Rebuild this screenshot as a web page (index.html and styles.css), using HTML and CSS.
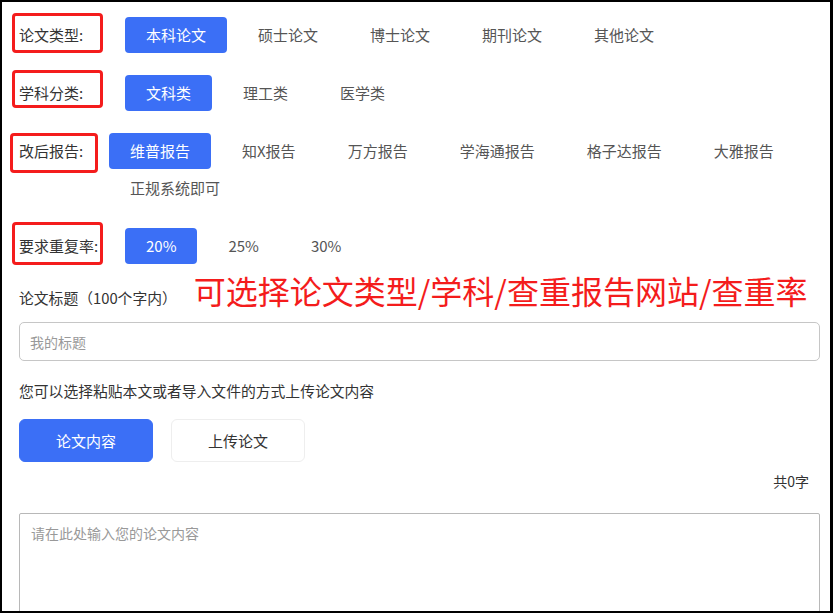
FILE: index.html
```html
<!DOCTYPE html>
<html lang="zh-CN">
<head>
<meta charset="utf-8">
<title>论文查重</title>
<link rel="stylesheet" href="styles.css">
</head>
<body>
<div class="page">
  <div class="row">
    <span class="mark mark-1"></span>
    <div class="label">论文类型:</div>
    <div class="options">
      <span class="opt active">本科论文</span>
      <span class="opt">硕士论文</span>
      <span class="opt">博士论文</span>
      <span class="opt">期刊论文</span>
      <span class="opt">其他论文</span>
    </div>
  </div>
  <div class="row">
    <span class="mark mark-2"></span>
    <div class="label">学科分类:</div>
    <div class="options">
      <span class="opt active">文科类</span>
      <span class="opt">理工类</span>
      <span class="opt">医学类</span>
    </div>
  </div>
  <div class="row">
    <span class="mark mark-3"></span>
    <div class="label label-narrow">改后报告:</div>
    <div class="options">
      <span class="opt active">维普报告</span>
      <span class="opt">知X报告</span>
      <span class="opt">万方报告</span>
      <span class="opt">学海通报告</span>
      <span class="opt">格子达报告</span>
      <span class="opt">大雅报告</span>
      <span class="opt">正规系统即可</span>
    </div>
  </div>
  <div class="row">
    <span class="mark mark-4"></span>
    <div class="label">要求重复率:</div>
    <div class="options">
      <span class="opt active">20%</span>
      <span class="opt">25%</span>
      <span class="opt">30%</span>
    </div>
  </div>

  <div class="title-row">
    <span class="field-label">论文标题（100个字内）</span>
    <span class="note">可选择论文类型/学科/查重报告网站/查重率</span>
  </div>
  <input class="title-input" type="text" placeholder="我的标题">

  <p class="hint">您可以选择粘贴本文或者导入文件的方式上传论文内容</p>

  <div class="tabs">
    <span class="tab tab-active">论文内容</span>
    <span class="tab">上传论文</span>
  </div>

  <div class="count">共0字</div>

  <textarea class="content" placeholder="请在此处输入您的论文内容"></textarea>
</div>
</body>
</html>
```

FILE: styles.css
```css
* {
  box-sizing: border-box;
}

html, body {
  margin: 0;
  padding: 0;
  background: #000;
}

body {
  padding: 2px 3px 2px 2px;
  font-family: "Noto Sans CJK SC", "Noto Sans", sans-serif;
  color: #333;
}

.page {
  background: #fff;
  height: 609px;
  overflow: hidden;
  padding: 15px 10px 0 17px;
}

.row {
  position: relative;
  display: flex;
  align-items: flex-start;
  margin-bottom: 22px;
}

.label {
  width: 106px;
  flex: none;
  font-size: 15px;
  line-height: 36px;
  color: #333;
}

.label-narrow {
  width: 90px;
}

.options {
  flex: 1;
  display: flex;
  flex-wrap: wrap;
  column-gap: 10px;
  row-gap: 1px;
}

.opt {
  height: 36px;
  line-height: 36px;
  padding: 0 21px;
  font-size: 15px;
  color: #555;
  border-radius: 4px;
  white-space: nowrap;
}

.opt.active {
  background: #3b6ff6;
  color: #fff;
}

.mark {
  position: absolute;
  border: 3.5px solid #f41c1c;
  border-radius: 4px;
  pointer-events: none;
}

.mark-1 {
  left: -7px;
  top: -4px;
  width: 91px;
  height: 40px;
}

.mark-2 {
  left: -7px;
  top: -5px;
  width: 91px;
  height: 38px;
}

.mark-3 {
  left: -9px;
  top: 0;
  width: 88px;
  height: 40px;
}

.mark-4 {
  left: -7px;
  top: -6px;
  width: 91px;
  height: 43px;
}

.title-row {
  display: flex;
  align-items: baseline;
  margin-top: -16px;
  height: 50px;
}

.field-label {
  font-size: 14.8px;
  color: #333;
  line-height: 36px;
}

.note {
  margin-left: 17px;
  font-size: 32px;
  line-height: 40px;
  color: #f41c1c;
  white-space: nowrap;
}

.title-input {
  display: block;
  width: 801px;
  height: 39px;
  margin: 2px 0 0 0;
  padding: 0 10px;
  border: 1px solid #c6c6c6;
  border-radius: 5px;
  font-family: inherit;
  font-size: 14px;
  color: #333;
  outline: none;
}

.title-input::placeholder,
.content::placeholder {
  color: #999;
}

.hint {
  margin: 20px 0 0 0;
  font-size: 14.8px;
  line-height: 20px;
  color: #333;
}

.tabs {
  display: flex;
  gap: 18px;
  margin-top: 18px;
}

.tab {
  width: 134px;
  height: 43px;
  line-height: 41px;
  text-align: center;
  font-size: 15px;
  color: #333;
  border: 1px solid #eee;
  border-radius: 6px;
  background: #fff;
}

.tab-active {
  background: #3b6ff6;
  border-color: #3b6ff6;
  color: #fff;
}

.count {
  margin-top: 9px;
  padding-right: 11px;
  text-align: right;
  font-size: 14px;
  line-height: 20px;
  color: #333;
}

.content {
  display: block;
  width: 801px;
  height: 140px;
  margin-top: 22px;
  padding: 9px 11px;
  border: 1px solid #b8b8b8;
  border-radius: 2px;
  font-family: inherit;
  font-size: 14px;
  line-height: 20px;
  resize: none;
  outline: none;
}
```
